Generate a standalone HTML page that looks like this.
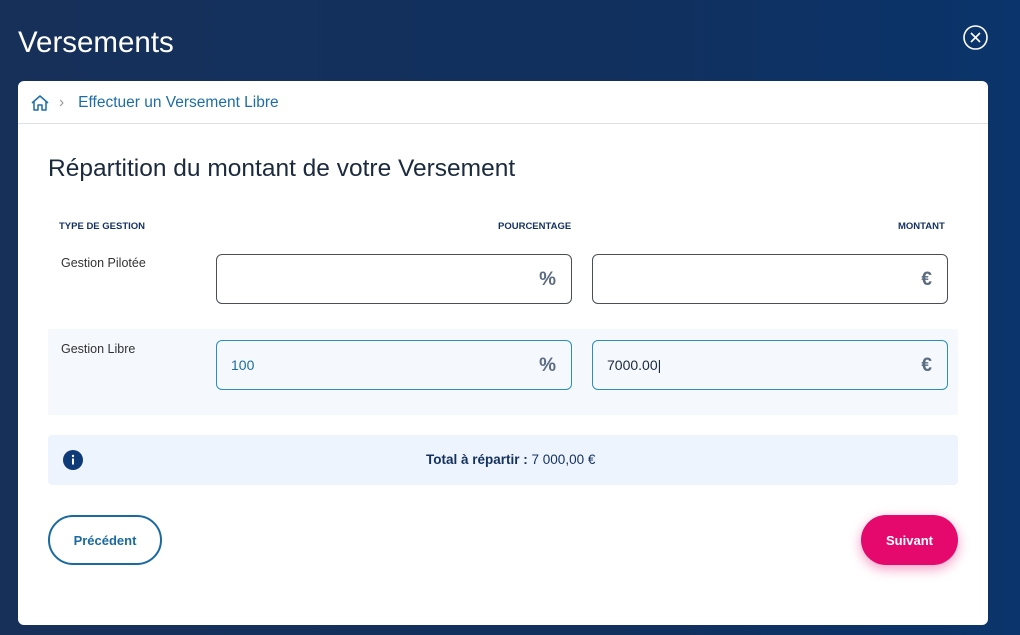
<!DOCTYPE html>
<html><head><meta charset="utf-8"><style>
*{box-sizing:border-box;margin:0;padding:0}
body{width:1020px;height:635px;overflow:hidden;font-family:"Liberation Sans",sans-serif;background:linear-gradient(90deg,#16305a 0%,#11305e 60%,#0a346b 100%);position:relative}
.t{position:absolute;left:18px;top:26px;color:#fff;font-size:29.5px}
.x{position:absolute;left:963px;top:25px}
.card{position:absolute;left:18px;top:81px;width:970px;height:544px;background:#fff;border-radius:6px}
.bc{height:43px;border-bottom:1px solid #dde1e6;display:flex;align-items:center;padding-left:12px;padding-top:2px;color:#1d6da5;font-size:15.5px}
h2{position:absolute;left:30px;top:74px;font-weight:normal;font-size:24.5px;color:#1b2a3d}
.h{position:absolute;top:140px;font-size:9.5px;font-weight:bold;color:#13315f}
.lab{position:absolute;font-size:12.5px;color:#333}
.in{position:absolute;width:356px;height:50px;border:1px solid #4a4f57;border-radius:6px;font-size:14px;padding-left:14px;line-height:48px;color:#1d6da5}
.in.a{border-color:#2a90b8}
.in span{position:absolute;right:15px;top:1px;color:#5b6b80;font-size:19px;font-weight:bold}
.row2{position:absolute;left:30px;top:248px;width:910px;height:86px;background:#f5f8fc}
.info{position:absolute;left:30px;top:354px;width:910px;height:50px;background:#edf4fd;border-radius:4px}
.btn{position:absolute;top:434px;height:50px;border-radius:25px;font-size:13px;font-weight:bold;display:flex;align-items:center;justify-content:center}
</style></head><body>
<div class="t">Versements</div>
<svg class="x" width="25" height="25" viewBox="0 0 25 25"><circle cx="12.5" cy="12.5" r="11.5" fill="none" stroke="#fff" stroke-width="1.6"/><path d="M8 8L17 17M17 8L8 17" stroke="#fff" stroke-width="1.6"/></svg>
<div class="card">
<div class="bc"><svg width="20" height="18" viewBox="0 0 20 18"><path d="M2 9L10 2L18 9M4 7.5V16H8V11H12V16H16V7.5" fill="none" stroke="#1d6da5" stroke-width="1.5" stroke-linejoin="round"/></svg><span style="color:#999;margin:0 14px 0 9px">›</span>Effectuer un Versement Libre</div>
<h2>Répartition du montant de votre Versement</h2>
<div class="h" style="left:41px">TYPE DE GESTION</div>
<div class="h" style="left:480px">POURCENTAGE</div>
<div class="h" style="left:880px">MONTANT</div>
<div class="lab" style="left:43px;top:175px">Gestion Pilotée</div>
<div class="in" style="left:198px;top:173px"><span>%</span></div>
<div class="in" style="left:574px;top:173px"><span>€</span></div>
<div class="row2"></div>
<div class="lab" style="left:43px;top:261px">Gestion Libre</div>
<div class="in a" style="left:198px;top:259px">100<span>%</span></div>
<div class="in a" style="left:574px;top:259px;padding-left:14px;color:#1b2a3d">7000.00|<span>€</span></div>
<div class="info"><svg style="position:absolute;left:15px;top:15px" width="20" height="20"><circle cx="10" cy="10" r="10" fill="#0f3a78"/><rect x="9" y="8.5" width="2" height="6" fill="#fff"/><circle cx="10" cy="6" r="1.2" fill="#fff"/></svg><div style="position:absolute;left:378px;top:17px;font-size:13.5px;color:#13315f"><b>Total à répartir :</b> 7 000,00 €</div></div>
<div class="btn" style="left:30px;width:114px;border:2px solid #1a6aa0;color:#1a6aa0">Précédent</div>
<div class="btn" style="left:843px;width:97px;background:#e5096e;color:#fff;box-shadow:0 4px 12px rgba(229,9,110,.4)">Suivant</div>
</div>
</body></html>
